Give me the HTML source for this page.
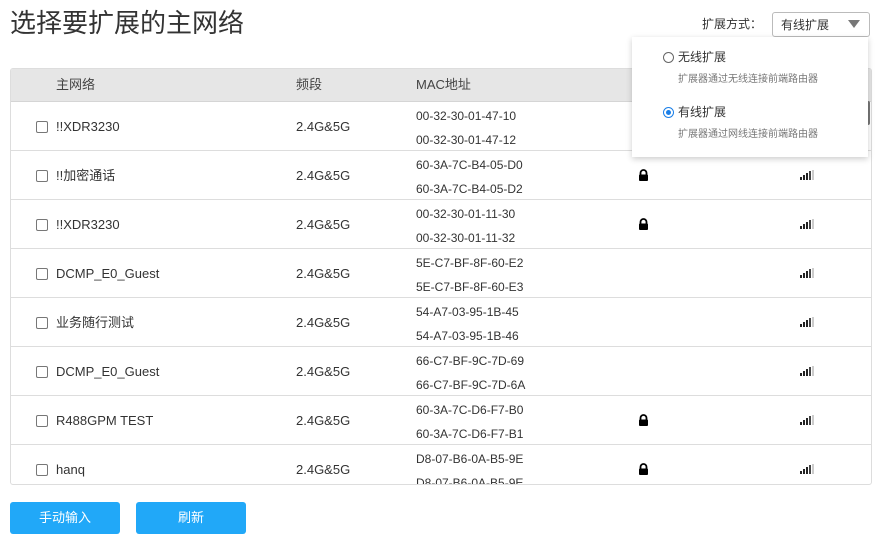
<!DOCTYPE html>
<html><head><meta charset="utf-8"><style>
*{margin:0;padding:0;box-sizing:border-box}
body{width:882px;height:538px;background:#fff;font-family:"Liberation Sans","Noto Sans CJK SC",sans-serif;color:#333;position:relative;overflow:hidden;font-size:13px;line-height:16px}
.title{position:absolute;left:10px;top:6px;font-size:26px;line-height:34px;color:#333}
.tbl{position:absolute;left:10px;top:68px;width:862px;height:417px;border:1px solid #ddd;border-radius:3px;overflow:hidden}
.hd{height:33px;background:#e6e6e6;border-bottom:1px solid #d5d5d5;position:relative}
.hd span{position:absolute;top:8px;font-size:13px;color:#444}
.row{height:49px;border-bottom:1px solid #ddd;position:relative}
.row .cb{position:absolute;left:25px;top:19px;width:12px;height:12px;border:1px solid #777;border-radius:2px}
.row .n{position:absolute;left:45px;top:17px;font-size:13px}
.row .b{position:absolute;left:285px;top:17px}
.row .m1{position:absolute;left:405px;top:6px;font-size:12px}
.row .m2{position:absolute;left:405px;top:30px;font-size:12px}
.lock{position:absolute;left:627px;top:18px;width:11px;height:12px}
.sig{position:absolute;left:789px;top:19px}
.btn{position:absolute;top:502px;height:32px;width:110px;background:#21a8f8;border-radius:3px;color:#fff;text-align:center;line-height:32px;font-size:13px}
.sel{position:absolute;left:772px;top:12px;width:98px;height:25px;border:1px solid #bbb;border-radius:3px;font-size:12px;padding:4px 0 0 8px}
.pop{position:absolute;left:632px;top:37px;width:236px;height:120px;background:#fff;box-shadow:0 2px 6px rgba(0,0,0,.2)}
.radio{position:absolute;left:31px;width:11px;height:11px;border:1px solid #666;border-radius:50%}
</style></head><body>
<div class="title">选择要扩展的主网络</div>
<div style="position:absolute;left:702px;top:16px;font-size:12px">扩展方式：</div>
<div class="sel">有线扩展<svg style="position:absolute;right:9px;top:7px" width="12" height="8"><path d="M0 0H12L6 8Z" fill="#777"/></svg></div>
<div class="tbl">
<div class="hd"><span style="left:45px">主网络</span><span style="left:285px">频段</span><span style="left:405px">MAC地址</span></div>
<div class="row"><div class="cb"></div><div class="n">!!XDR3230</div><div class="b">2.4G&amp;5G</div><div class="m1">00-32-30-01-47-10</div><div class="m2">00-32-30-01-47-12</div></div>
<div class="row"><div class="cb"></div><div class="n">!!加密通话</div><div class="b">2.4G&amp;5G</div><div class="m1">60-3A-7C-B4-05-D0</div><div class="m2">60-3A-7C-B4-05-D2</div><svg class="lock" viewBox="0 0 11 12"><path d="M2.5 6V4a3 3 0 016 0V6" stroke="#000" stroke-width="1.8" fill="none"/><rect x="1" y="5.5" width="9" height="6.5" rx="1"/></svg><svg class="sig" width="15" height="10"><rect x="0" y="7" width="2" height="3" fill="#222"/><rect x="3" y="5" width="2" height="5" fill="#222"/><rect x="6" y="3" width="2" height="7" fill="#222"/><rect x="9" y="1" width="2" height="9" fill="#444"/><rect x="12" y="0" width="2" height="10" fill="#ccc"/></svg></div>
<div class="row"><div class="cb"></div><div class="n">!!XDR3230</div><div class="b">2.4G&amp;5G</div><div class="m1">00-32-30-01-11-30</div><div class="m2">00-32-30-01-11-32</div><svg class="lock" viewBox="0 0 11 12"><path d="M2.5 6V4a3 3 0 016 0V6" stroke="#000" stroke-width="1.8" fill="none"/><rect x="1" y="5.5" width="9" height="6.5" rx="1"/></svg><svg class="sig" width="15" height="10"><rect x="0" y="7" width="2" height="3" fill="#222"/><rect x="3" y="5" width="2" height="5" fill="#222"/><rect x="6" y="3" width="2" height="7" fill="#222"/><rect x="9" y="1" width="2" height="9" fill="#444"/><rect x="12" y="0" width="2" height="10" fill="#ccc"/></svg></div>
<div class="row"><div class="cb"></div><div class="n">DCMP_E0_Guest</div><div class="b">2.4G&amp;5G</div><div class="m1">5E-C7-BF-8F-60-E2</div><div class="m2">5E-C7-BF-8F-60-E3</div><svg class="sig" width="15" height="10"><rect x="0" y="7" width="2" height="3" fill="#222"/><rect x="3" y="5" width="2" height="5" fill="#222"/><rect x="6" y="3" width="2" height="7" fill="#222"/><rect x="9" y="1" width="2" height="9" fill="#444"/><rect x="12" y="0" width="2" height="10" fill="#ccc"/></svg></div>
<div class="row"><div class="cb"></div><div class="n">业务随行测试</div><div class="b">2.4G&amp;5G</div><div class="m1">54-A7-03-95-1B-45</div><div class="m2">54-A7-03-95-1B-46</div><svg class="sig" width="15" height="10"><rect x="0" y="7" width="2" height="3" fill="#222"/><rect x="3" y="5" width="2" height="5" fill="#222"/><rect x="6" y="3" width="2" height="7" fill="#222"/><rect x="9" y="1" width="2" height="9" fill="#444"/><rect x="12" y="0" width="2" height="10" fill="#ccc"/></svg></div>
<div class="row"><div class="cb"></div><div class="n">DCMP_E0_Guest</div><div class="b">2.4G&amp;5G</div><div class="m1">66-C7-BF-9C-7D-69</div><div class="m2">66-C7-BF-9C-7D-6A</div><svg class="sig" width="15" height="10"><rect x="0" y="7" width="2" height="3" fill="#222"/><rect x="3" y="5" width="2" height="5" fill="#222"/><rect x="6" y="3" width="2" height="7" fill="#222"/><rect x="9" y="1" width="2" height="9" fill="#444"/><rect x="12" y="0" width="2" height="10" fill="#ccc"/></svg></div>
<div class="row"><div class="cb"></div><div class="n">R488GPM TEST</div><div class="b">2.4G&amp;5G</div><div class="m1">60-3A-7C-D6-F7-B0</div><div class="m2">60-3A-7C-D6-F7-B1</div><svg class="lock" viewBox="0 0 11 12"><path d="M2.5 6V4a3 3 0 016 0V6" stroke="#000" stroke-width="1.8" fill="none"/><rect x="1" y="5.5" width="9" height="6.5" rx="1"/></svg><svg class="sig" width="15" height="10"><rect x="0" y="7" width="2" height="3" fill="#222"/><rect x="3" y="5" width="2" height="5" fill="#222"/><rect x="6" y="3" width="2" height="7" fill="#222"/><rect x="9" y="1" width="2" height="9" fill="#444"/><rect x="12" y="0" width="2" height="10" fill="#ccc"/></svg></div>
<div class="row" style="border:none"><div class="cb"></div><div class="n">hanq</div><div class="b">2.4G&amp;5G</div><div class="m1">D8-07-B6-0A-B5-9E</div><div class="m2">D8-07-B6-0A-B5-9E</div><svg class="lock" viewBox="0 0 11 12"><path d="M2.5 6V4a3 3 0 016 0V6" stroke="#000" stroke-width="1.8" fill="none"/><rect x="1" y="5.5" width="9" height="6.5" rx="1"/></svg><svg class="sig" width="15" height="10"><rect x="0" y="7" width="2" height="3" fill="#222"/><rect x="3" y="5" width="2" height="5" fill="#222"/><rect x="6" y="3" width="2" height="7" fill="#222"/><rect x="9" y="1" width="2" height="9" fill="#444"/><rect x="12" y="0" width="2" height="10" fill="#ccc"/></svg></div>
</div>
<div style="position:absolute;left:866px;top:101px;width:4px;height:24px;background:#777;border-radius:2px"></div>
<div class="pop">
<div class="radio" style="top:15px"></div><div style="position:absolute;left:46px;top:12px;font-size:12px">无线扩展</div>
<div style="position:absolute;left:46px;top:35px;font-size:10px;color:#777">扩展器通过无线连接前端路由器</div>
<div class="radio" style="top:70px;border-color:#1a7fe8"><div style="position:absolute;left:2px;top:2px;width:5px;height:5px;border-radius:50%;background:#1a7fe8"></div></div><div style="position:absolute;left:46px;top:67px;font-size:12px">有线扩展</div>
<div style="position:absolute;left:46px;top:90px;font-size:10px;color:#777">扩展器通过网线连接前端路由器</div>
</div>
<div class="btn" style="left:10px">手动输入</div>
<div class="btn" style="left:136px">刷新</div>
</body></html>
